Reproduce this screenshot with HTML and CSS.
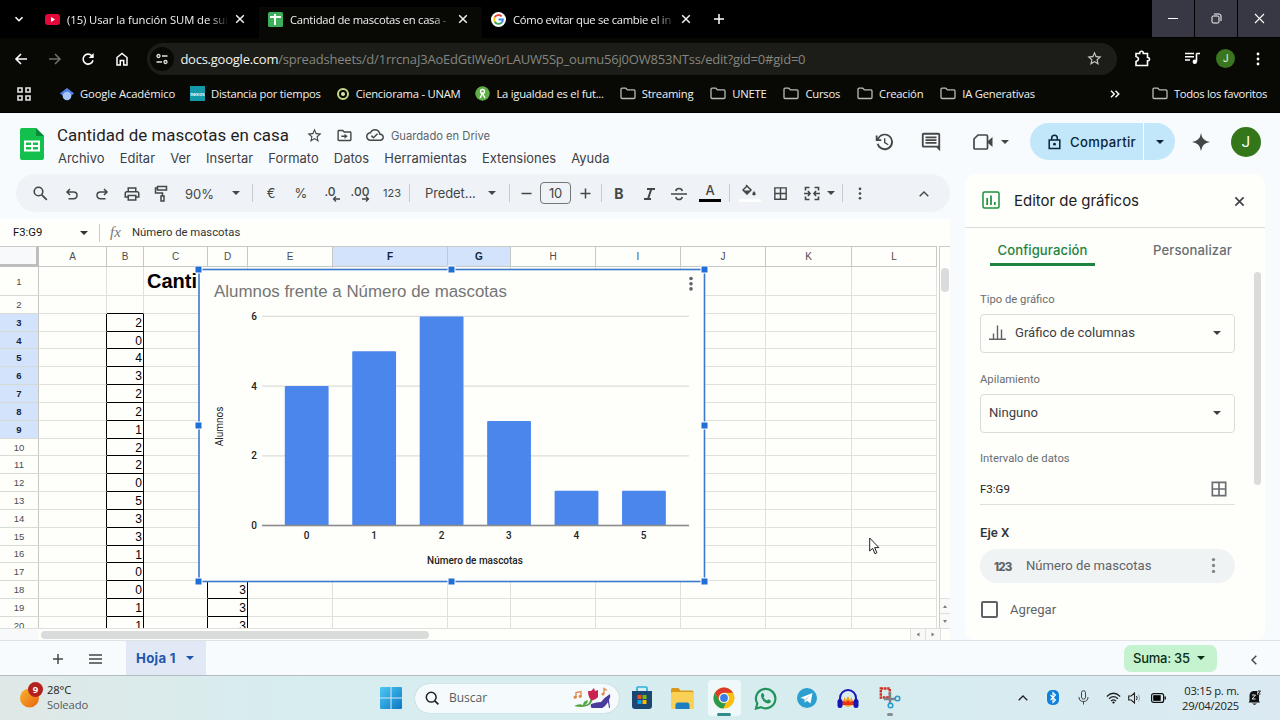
FILE: index.html
```
<!DOCTYPE html>
<html lang="es">
<head>
    <meta charset="UTF-8">
    <title>Cantidad de mascotas en casa</title>
    <link rel="stylesheet" href="styles.css">
</head>
<body>
<svg class="defs">
    <symbol id="close" viewBox="0 0 12 12"><path d="M2.2 2.2l7.6 7.6M9.8 2.2l-7.6 7.6" fill="none" stroke="currentColor" stroke-width="1.5"/></symbol>
    <symbol id="caret" viewBox="0 0 10 6"><path d="M1 1h8L5 5z" fill="currentColor"/></symbol>
    <symbol id="dots" viewBox="0 0 4 16"><circle cx="2" cy="3" r="1.4" fill="currentColor"/><circle cx="2" cy="8" r="1.4" fill="currentColor"/><circle cx="2" cy="13" r="1.4" fill="currentColor"/></symbol>
    <symbol id="folder" viewBox="0 0 16 13"><path d="M1 10.5v-8.300q0-1 1-1h3.800l1.700 1.700h6.500q1 0 1 1v6.600q0 1-1 1h-12q-1 0-1-1z" fill="none" stroke="currentColor" stroke-width="1.300"/></symbol>
    <symbol id="star" viewBox="0 0 24 24"><path fill="currentColor" d="M22 9.240l-7.190-.62L12 2 9.190 8.630 2 9.240l5.460 4.730L5.820 21 12 17.270 18.180 21l-1.630-7.030L22 9.240zM12 15.400l-3.760 2.270 1-4.280-3.320-2.880 4.380-.38L12 6.100l1.710 4.040 4.380.38-3.320 2.880 1 4.280L12 15.400z"/></symbol>
    <symbol id="grid4" viewBox="0 0 24 24"><path fill="currentColor" d="M3 3v18h18V3H3zm8 16H5v-6h6v6zm0-8H5V5h6v6zm8 8h-6v-6h6v6zm0-8h-6V5h6v6z"/></symbol>
</svg>

<!-- navegador -->
<div class="tabs">
    <span class="tabMenu"><svg width="10" height="10" viewBox="0 0 10 10"><path d="M1.500 3.200L5 6.700l3.500-3.500" fill="none" stroke="#fff" stroke-width="1.600"/></svg></span>
    <div class="tab">
        <svg width="15" height="15" viewBox="0 0 15 15"><rect y="2" width="15" height="11" rx="3" fill="#e5093a"/><path d="M6 5v5l4-2.500z" fill="#fff"/></svg>
        <span class="tabText">(15) Usar la función SUM de sur</span>
        <svg class="x"><use href="#close"/></svg>
    </div>
    <div class="tab curr">
        <svg width="15" height="15" viewBox="0 0 15 15"><rect width="15" height="15" rx="1.500" fill="#3fae5a"/><path d="M2 5h11M7 2v11" stroke="#fff" stroke-width="2"/></svg>
        <span class="tabText">Cantidad de mascotas en casa -</span>
        <svg class="x"><use href="#close"/></svg>
    </div>
    <div class="tab">
        <svg width="15" height="15" viewBox="0 0 15 15"><circle cx="7.500" cy="7.500" r="7.500" fill="#fff"/><g fill="none" stroke-width="1.900"><path d="M3.700 5.300A4.400 4.400 0 0 1 10.700 4.400" stroke="#ea4335"/><path d="M3.700 9.700A4.400 4.400 0 0 1 3.700 5.300" stroke="#fbbc04"/><path d="M10.400 10.800A4.400 4.400 0 0 1 3.700 9.700" stroke="#34a853"/><path d="M7.500 7.500h4.400Q11.900 9.700 10.400 10.800" stroke="#4285f4"/></g></svg>
        <span class="tabText">Cómo evitar que se cambie el in</span>
        <svg class="x"><use href="#close"/></svg>
    </div>
    <svg class="newTab" width="12" height="12" viewBox="0 0 12 12"><path d="M6 1v10M1 6h10" stroke="#fff" stroke-width="1.500"/></svg>
    <div class="winBtns">
        <span><svg width="10" height="10" viewBox="0 0 10 10"><path d="M0 4.500h10" stroke="#fff"/></svg></span>
        <span><svg width="11" height="11" viewBox="0 0 11 11"><g fill="none" stroke="#fff"><rect x="1" y="3" width="7" height="7" rx="1.200"/><path d="M3 1h5q2 0 2 2v5"/></g></svg></span>
        <span><svg width="11" height="11" viewBox="0 0 11 11"><path d="M1 1l9 9M10 1l-9 9" stroke="#fff" stroke-width="1.100"/></svg></span>
    </div>
</div>
<div class="nav">
    <svg class="ni" viewBox="0 0 14 14"><path d="M13 7H2M7 2L2 7l5 5" fill="none" stroke="#fff" stroke-width="1.600"/></svg>
    <svg class="ni" viewBox="0 0 14 14"><path d="M1 7h11M7 2l5 5-5 5" fill="none" stroke="#6f706d" stroke-width="1.500"/></svg>
    <svg class="ni" viewBox="0 0 14 14"><path d="M12 8.200A5 5 0 1 1 10.600 3.500L12 4.800" fill="none" stroke="#fff" stroke-width="1.600"/><path d="M12.700 1v5H7.700z" fill="#fff"/></svg>
    <svg class="ni" viewBox="0 0 14 14"><path d="M2 13V5.500L7 1.500l5 4V13H8.700V8.500H5.300V13z" fill="none" stroke="#fff" stroke-width="1.500"/></svg>
    <div class="url">
        <span class="site"><svg width="12" height="12" viewBox="0 0 12 12"><g fill="none" stroke="#e3e3e3" stroke-width="1.300"><circle cx="2.500" cy="3" r="1.500"/><path d="M6 3h5.500M.5 9H6"/><circle cx="9.500" cy="9" r="1.500"/></g></svg></span>
        <span class="host">docs.google.com</span><span class="path">/spreadsheets/d/1rrcnaJ3AoEdGtIWe0rLAUW5Sp_oumu56j0OW853NTss/edit?gid=0#gid=0</span>
        <svg class="fav" width="17" height="17"><use href="#star"/></svg>
    </div>
    <svg class="ext" width="17" height="17" viewBox="0 0 17 17"><path d="M2 3.500h3.700V3a1.800 1.800 0 0 1 3.600 0v.5h4.200v4h.3a1.700 1.700 0 0 1 0 3.400h-.3v4.600H2v-4q2.500-.8 2.500-2.500T2 6.500z" fill="none" stroke="#fff" stroke-width="1.600"/></svg>
    <svg class="music" width="15" height="13" viewBox="0 0 15 13"><path d="M0 1.500h9M0 4.700h9M0 8h5M11.500 1.500v8M11.500 1.500h3.500" stroke="#fff" stroke-width="1.600"/><circle cx="9.800" cy="9.800" r="2.200" fill="#fff"/></svg>
    <span class="me">J</span>
    <svg class="navDots" width="4" height="16"><use href="#dots"/></svg>
</div>
<div class="marks">
    <svg class="apps" width="14" height="14" viewBox="0 0 14 14"><g fill="none" stroke="#e3e3e3" stroke-width="1.600"><path d="M1 1h4v4H1zM9 1h4v4H9zM1 9h4v4H1zM9 9h4v4H9z"/></g></svg>
    <a class="acad"><svg width="14" height="14" viewBox="0 0 14 14"><path d="M7 1l7 5.500H0z" fill="#5b8def"/><path d="M0 6.500L7 12l7-5.500L7 2z" fill="#4c7fe0"/><circle cx="7" cy="9" r="4.300" fill="#a9c6fb"/></svg>Google Académico</a>
    <a><svg width="15" height="15" viewBox="0 0 15 15"><rect width="15" height="15" fill="#1499ab"/><text x="7.500" y="9.500" class="tiny">nexos</text></svg>Distancia por tiempos</a>
    <a><svg width="14" height="14" viewBox="0 0 14 14"><circle cx="7" cy="7" r="5" fill="none" stroke="#c3d887" stroke-width="2"/><circle cx="7" cy="7" r="2" fill="#d6e7a5"/></svg>Cienciorama - UNAM</a>
    <a class="last"><svg width="15" height="15" viewBox="0 0 15 15"><circle cx="7.500" cy="7.500" r="7.200" fill="#5fae45"/><circle cx="7.500" cy="5.500" r="2" fill="none" stroke="#fff" stroke-width="1.300"/><path d="M5 12l2.500-4.500L10 12" fill="none" stroke="#fff" stroke-width="1.500"/></svg>La igualdad es el fut...</a>
    <a class="dir"><svg class="folder"><use href="#folder"/></svg>Streaming</a>
    <a class="dir"><svg class="folder"><use href="#folder"/></svg>UNETE</a>
    <a class="dir"><svg class="folder"><use href="#folder"/></svg>Cursos</a>
    <a class="dir"><svg class="folder"><use href="#folder"/></svg>Creación</a>
    <a class="dir"><svg class="folder"><use href="#folder"/></svg>IA Generativas</a>
    <svg class="more" width="10" height="8" viewBox="0 0 10 8"><path d="M1 .7L4.300 4 1 7.300M5.500 .7L8.800 4 5.500 7.300" fill="none" stroke="#fff" stroke-width="1.400"/></svg>
    <a class="all"><svg class="folder"><use href="#folder"/></svg>Todos los favoritos</a>
</div>

<!-- cabecera de la hoja -->
<div class="head">
    <svg class="logo" width="24" height="33" viewBox="0 0 24 33"><path d="M2 0h14l8 8v22q0 2-2 2H2q-2 0-2-2V2q0-2 2-2z" fill="#14c04d"/><path d="M16 0l8 8h-8z" fill="#0a8a37"/><path d="M4 12.500h16v11H4zM6 14.500v2.600h5v-2.600zM13 14.500v2.600h5v-2.600zM6 19v2.600h5V19zM13 19v2.600h5V19z" fill="#fff" fill-rule="evenodd"/></svg>
    <div class="doc">
        <div class="name">
            <span class="nameText">Cantidad de mascotas en casa</span>
            <svg width="17" height="17"><use href="#star"/></svg>
            <svg width="17" height="17" viewBox="0 0 24 24"><path fill="currentColor" d="M20 6h-8l-2-2H4c-1.100 0-2 .9-2 2v12c0 1.100.9 2 2 2h16c1.100 0 2-.9 2-2V8c0-1.100-.9-2-2-2zm0 12H4V6h5.170l2 2H20v10zm-8-4v2.500l4.500-3.500L12 9.500V12H7.500v2z"/></svg>
            <svg width="18" height="18" viewBox="0 0 24 24"><path fill="currentColor" d="M19.350 10.040C18.670 6.590 15.640 4 12 4 9.110 4 6.610 5.640 5.360 8.040 2.350 8.360 0 10.900 0 14c0 3.310 2.690 6 6 6h13c2.760 0 5-2.240 5-5 0-2.640-2.050-4.780-4.650-4.960zM19 18H6c-2.210 0-4-1.790-4-4s1.790-4 4-4h.71C7.370 7.690 9.480 6 12 6c3.040 0 5.500 2.460 5.500 5.500v.5H19c1.660 0 3 1.340 3 3s-1.340 3-3 3zm-9-3.820l-2.090-2.090L6.500 13.500 10 17l6.010-6.010-1.410-1.410z"/></svg>
            <span class="saved">Guardado en Drive</span>
        </div>
        <div class="menu"><span>Archivo</span><span>Editar</span><span>Ver</span><span>Insertar</span><span>Formato</span><span>Datos</span><span>Herramientas</span><span>Extensiones</span><span>Ayuda</span></div>
    </div>
    <div class="actions">
        <svg class="history" width="22" height="22" viewBox="0 0 24 24"><path fill="currentColor" d="M13 3a9 9 0 0 0-8 4.900V5H3v6h6V9H6.300A7 7 0 1 1 6 13.500l-1.900.6A9 9 0 1 0 13 3zm-1 5v5l4.300 2.600.7-1.200-3.500-2.100V8z"/></svg>
        <svg class="comment" width="22" height="22" viewBox="0 0 24 24"><path fill="currentColor" d="M22 4c0-1.100-.9-2-2-2H4c-1.100 0-2 .9-2 2v12c0 1.100.9 2 2 2h14l4 4V4zm-2 12H4V4h16v12zM6 12h12v2H6zm0-3h12v2H6zm0-3h12v2H6z"/></svg>
        <svg class="video" width="20" height="16" viewBox="0 0 20 16"><path d="M5 1h8.500q1 0 1 1v12q0 1-1 1H2q-1 0-1-1V5z" fill="none" stroke="currentColor" stroke-width="1.700"/><path d="M15 7l4.500-4v10L15 9z" fill="currentColor"/></svg>
        <svg class="caret videoCaret"><use href="#caret"/></svg>
        <div class="share">
            <svg width="13" height="16" viewBox="0 0 13 16"><path d="M1.200 6h10.600v8.500H1.200zM3.700 6V4a2.800 2.800 0 0 1 5.600 0v2" fill="none" stroke="currentColor" stroke-width="1.500"/><circle cx="6.500" cy="10.200" r="1.400" fill="currentColor"/></svg>
            <span class="shareText">Compartir</span>
            <span class="shareMore"><svg class="caret"><use href="#caret"/></svg></span>
        </div>
        <svg class="spark" width="18" height="18" viewBox="0 0 18 18"><path d="M9 0q1 8 9 9-8 1-9 9-1-8-9-9 8-1 9-9z" fill="currentColor"/></svg>
        <span class="user">J</span>
    </div>
</div>

<div class="main">
    <div class="left">
        <div class="bar">
            <span class="b search"><svg width="17" height="17" viewBox="0 0 17 17"><circle cx="6.500" cy="6.500" r="4.300" fill="none" stroke="currentColor" stroke-width="1.600"/><path d="M9.800 9.800l5 5" stroke="currentColor" stroke-width="1.800"/></svg></span>
            <span class="b low"><svg width="14" height="14" viewBox="0 0 14 14"><path d="M5 2L2 5l3 3M2 5h6.500q3.500 0 3.500 3.300T8.500 11.800H3.500" fill="none" stroke="currentColor" stroke-width="1.500"/></svg></span>
            <span class="b low"><svg width="14" height="14" viewBox="0 0 14 14"><path d="M9 2l3 3-3 3M12 5H5.500Q2 5 2 8.300t3.500 3.500h5" fill="none" stroke="currentColor" stroke-width="1.500"/></svg></span>
            <span class="b low"><svg width="18" height="18" viewBox="0 0 24 24"><path fill="currentColor" d="M19 8h-1V3H6v5H5c-1.660 0-3 1.340-3 3v6h4v4h12v-4h4v-6c0-1.660-1.340-3-3-3zM8 5h8v3H8V5zm8 14H8v-4h8v4zm2-4v-2H6v2H4v-4c0-.55.45-1 1-1h14c.55 0 1 .45 1 1v4h-2z"/></svg></span>
            <span class="b low"><svg width="16" height="17" viewBox="0 0 16 17"><path d="M3.500 1.500h9v3.500h-9zM3.500 3H1.500v5h7v3M7 11h3v5H7z" fill="none" stroke="currentColor" stroke-width="1.500"/></svg></span>
            <span class="zoomText">90%</span>
            <span class="c28"><svg class="caret"><use href="#caret"/></svg></span>
            <i></i>
            <span class="b euro">€</span>
            <span class="b euro">%</span>
            <span class="b dec">.0<svg width="8" height="6" viewBox="0 0 8 6"><path d="M8 3H2M4 .5L1.500 3 4 5.500" fill="none" stroke="currentColor" stroke-width="1.300"/></svg></span>
            <span class="b dec">.00<svg width="8" height="6" viewBox="0 0 8 6"><path d="M0 3h6M4 .5L6.500 3 4 5.500" fill="none" stroke="currentColor" stroke-width="1.300"/></svg></span>
            <span class="b fmt">123</span>
            <i></i>
            <span class="font">Predet...</span>
            <span class="c24"><svg class="caret"><use href="#caret"/></svg></span>
            <i class="off"></i>
            <span class="c28"><svg width="11" height="11" viewBox="0 0 11 11"><path d="M.5 5.500h10" stroke="currentColor" stroke-width="1.500"/></svg></span>
            <span class="size">10</span>
            <span class="c28"><svg width="11" height="11" viewBox="0 0 11 11"><path d="M.5 5.500h10M5.500.5v10" stroke="currentColor" stroke-width="1.500"/></svg></span>
            <i></i>
            <span class="b bold">B</span>
            <span class="b low"><svg width="11" height="12" viewBox="0 0 11 12"><path d="M3 1h8M0 11h7M7.300 1L4 11" stroke="currentColor" stroke-width="2" fill="none"/></svg></span>
            <span class="b low"><svg width="16" height="14" viewBox="0 0 16 14"><path d="M0 7h16M11.300 4Q10.800 1.500 8 1.500T4.800 4M4.800 10q.5 2.500 3.200 2.500T11.300 10" fill="none" stroke="currentColor" stroke-width="1.600"/></svg></span>
            <span class="b color">A</span>
            <i></i>
            <span class="b fill"><svg width="16" height="15" viewBox="0 0 16 15"><path d="M4 1l5 5-4 4-4-4 4-4" fill="none" stroke="currentColor" stroke-width="1.500"/><path d="M1 6.500h8L5 10.500z" fill="currentColor"/><path d="M12 7q3.500 4 0 4.500-3.500-.5 0-4.500z" fill="currentColor"/></svg></span>
            <span class="b low borders"><svg width="17" height="17"><use href="#grid4"/></svg></span>
            <span class="b low"><svg width="16" height="15" viewBox="0 0 16 15"><path d="M5.500 1.500H1.500v3M10.500 1.500h4v3M5.500 13.500H1.500v-3M10.500 13.500h4v-3M0 7.500h5M16 7.500h-5M4 5l2 2.500L4 10M12 5l-2 2.500 2 2.500" fill="none" stroke="currentColor" stroke-width="1.600"/></svg></span>
            <span class="c12"><svg class="caret"><use href="#caret"/></svg></span>
            <i></i>
            <span class="b low"><svg width="4" height="15"><use href="#dots"/></svg></span>
            <span class="b up low"><svg width="10" height="6" viewBox="0 0 10 6"><path d="M.7 5.300L5 1l4.300 4.300" fill="none" stroke="currentColor" stroke-width="1.400"/></svg></span>
        </div>
        <div class="formula">
            <span class="range">F3:G9</span><svg class="caret"><use href="#caret"/></svg>
            <i></i><em>fx</em><span>Número de mascotas</span>
        </div>
        <div class="sheet">
            <div class="grid" id="grid"></div>
            <div class="vbar"><b></b><u></u><u class="down"></u></div>
            <svg class="chart" viewBox="195 265 514 322" id="chart">
                <rect x="199" y="269.500" width="505.500" height="312" fill="#fefefb" stroke="#3c78cc" stroke-width="1.600"/>
                <text x="214" y="297" class="chTitle">Alumnos frente a Número de mascotas</text>
                <g fill="#5f6368"><circle cx="691" cy="278.500" r="1.800"/><circle cx="691" cy="283.700" r="1.800"/><circle cx="691" cy="288.900" r="1.800"/></g>
                <text x="475" y="564" class="chAxis mid">Número de mascotas</text>
                <text transform="translate(222.500 426.500) rotate(-90)" class="chAxis mid thin">Alumnos</text>
            </svg>
            <svg class="mouse" width="11" height="18" viewBox="0 0 11 18"><path d="M.7 1v13l3-2.700 2.200 5.400 2-.9-2.200-5.200h4.200z" fill="#fff" stroke="#222"/></svg>
        </div>
        <div class="hbar"><b></b><u></u><u class="next"></u><s></s></div>
    </div>

    <!-- editor de gráficos -->
    <div class="panel">
        <div class="panelHead">
            <svg width="18" height="18" viewBox="0 0 18 18"><rect x="1" y="1" width="16" height="16" rx="1.500" fill="none" stroke="#1e8e3e" stroke-width="1.500"/><path d="M5.200 7v7M9 4.500V14M12.800 11v3" stroke="#1e8e3e" stroke-width="1.700"/></svg>
            <span>Editor de gráficos</span>
            <svg class="x"><use href="#close"/></svg>
        </div>
        <div class="panelTabs"><span class="on">Configuración</span><span>Personalizar</span></div>
        <div class="fields">
            <label>Tipo de gráfico</label>
            <div class="select">
                <svg width="17" height="15" viewBox="0 0 17 15"><path d="M0 14.300h17M4.500 14V8.500M8.500 14V.5M12.500 14V4.500" stroke="#5f6368" stroke-width="1.400"/></svg>
                <span>Gráfico de columnas</span><svg class="caret"><use href="#caret"/></svg>
            </div>
            <label>Apilamiento</label>
            <div class="select"><span>Ninguno</span><svg class="caret"><use href="#caret"/></svg></div>
            <label class="l3">Intervalo de datos</label>
            <div class="input"><span>F3:G9</span><svg width="20" height="20"><use href="#grid4"/></svg></div>
            <div class="axis">Eje X</div>
            <div class="chip"><b>123</b><span>Número de mascotas</span><svg width="5" height="19"><use href="#dots"/></svg></div>
            <div class="check"><b></b>Agregar</div>
        </div>
        <div class="thumb"></div>
    </div>
</div>

<div class="foot">
    <svg class="plus" width="12" height="12" viewBox="0 0 12 12"><path d="M6 1v10M1 6h10" stroke="#444746" stroke-width="1.500"/></svg>
    <svg class="lines" width="13" height="10" viewBox="0 0 13 10"><path d="M0 1h13M0 5h13M0 9h13" stroke="#444746" stroke-width="1.500"/></svg>
    <div class="hoja">Hoja 1<svg class="caret"><use href="#caret"/></svg></div>
    <div class="suma">Suma: 35<svg class="caret"><use href="#caret"/></svg></div>
    <svg class="back" width="6" height="10" viewBox="0 0 6 10"><path d="M5.300 .7L1 5l4.300 4.300" fill="none" stroke="#444746" stroke-width="1.500"/></svg>
</div>

<!-- barra de tareas -->
<div class="task">
    <div class="weather">
        <svg width="26" height="30" viewBox="0 0 26 30"><defs><linearGradient id="sun" x1="0" y1="0" x2="1" y2="1"><stop offset="0" stop-color="#fbb430"/><stop offset="1" stop-color="#e8630f"/></linearGradient></defs><circle cx="10.500" cy="16" r="9.500" fill="url(#sun)"/><circle cx="16.500" cy="7.500" r="7.500" fill="#b3211f"/><text x="16.500" y="11" class="nine">9</text></svg>
        <div><p>28°C</p><p class="dim">Soleado</p></div>
    </div>
    <svg class="win" width="22" height="22" viewBox="0 0 22 22"><defs><linearGradient id="blue" x1="0" y1="0" x2="1" y2="1"><stop offset="0" stop-color="#4fc8f4"/><stop offset="1" stop-color="#0a78c4"/></linearGradient></defs><path fill="url(#blue)" d="M0 1q0-1 1-1h9.500v10.500H0zM11.500 0H21q1 0 1 1v9.500H11.500zM0 11.500h10.500V22H1q-1 0-1-1zM11.500 11.500H22V21q0 1-1 1h-9.500z"/></svg>
    <div class="find">
        <svg width="14" height="14" viewBox="0 0 14 14"><circle cx="6.200" cy="6.200" r="4.900" fill="none" stroke="#222" stroke-width="1.500"/><path d="M9.800 9.800l3.600 3.600" stroke="#222" stroke-width="1.700"/></svg>
        <span>Buscar</span>
        <svg class="art" width="38" height="22" viewBox="0 0 38 22">
            <g fill="none" stroke="#e0884e" stroke-width="1.300"><path d="M3 10V5.500l5-1V9M31 7V1.500l3 2"/></g><g fill="#e0884e"><circle cx="2.200" cy="10.200" r="1.600"/><circle cx="7.200" cy="9.300" r="1.600"/><circle cx="30" cy="7" r="1.600"/></g>
            <path d="M20 10q-1 8-6 9-6 2-13 0 5-3 9-1 0-4 5-5 0 3-3 5 5-1 6-8z" fill="#55a545"/>
            <path d="M15 4l3 0 3-3 1 3 3-1 0 7q-3 4-7 3-3-3-3-9z" fill="#cb2350"/>
            <path d="M37 7q-5 3-9 8-4 0-10 2-1 3 1 4h10q3-1 6-6l1 6h1l-1-8q2-3 1-6z" fill="#4a3c9c"/>
        </svg>
    </div>
    <span class="app"><svg width="22" height="24" viewBox="0 0 22 24"><path d="M6 6V2q0-1 1-1h8q1 0 1 1v4" fill="none" stroke="#31b0de" stroke-width="1.700"/><path d="M1 5h20v15q0 3-3 3H4q-3 0-3-3z" fill="#1c4772"/><path d="M6.500 9h4v4h-4z" fill="#f25022"/><path d="M11.500 9h4v4h-4z" fill="#7fba00"/><path d="M6.500 14h4v4h-4z" fill="#00a4ef"/><path d="M11.500 14h4v4h-4z" fill="#ffb900"/></svg></span>
    <span class="app"><svg width="23" height="21" viewBox="0 0 23 21"><path d="M0 1.500Q0 0 1.500 0h6l2 2.500H21q1.500 0 1.500 1.500v6H0z" fill="#d99a1c"/><rect y="4" width="23" height="17" rx="1.500" fill="#fbd155"/><path d="M4.500 21v-4q0-2.500 2.500-2.500h9q2.500 0 2.500 2.500v4z" fill="#1d7fc0"/></svg></span>
    <span class="app on"><svg width="22" height="22" viewBox="0 0 48 48"><circle cx="24" cy="24" r="23" fill="#fbbf12"/><path d="M4.100 12.500A23 23 0 0 1 43.900 12.500H24A11.500 11.500 0 0 0 14 29.800z" fill="#dd3a2c"/><path d="M4.100 12.500L14 29.800A11.500 11.500 0 0 0 24 35.500l4-.700L22.500 47A23 23 0 0 1 4.100 12.500z" fill="#2c9a4b"/><circle cx="24" cy="24" r="11" fill="#fff"/><circle cx="24" cy="24" r="8.500" fill="#3b7de8"/></svg></span>
    <span class="app"><svg width="23" height="23" viewBox="0 0 23 23"><path d="M2 21.500l1.300-5A9.700 9.700 0 1 1 7 20.100z" fill="none" stroke="#22935a" stroke-width="2.200"/><path d="M7.500 6.500q1.500-1 2.200.5l.8 2-1 1.300q1.200 2.300 3.500 3.300l1.200-1.300 2.500 1.200q.6 1.500-1 2.600-2.500 1.300-6-1.900-4-3.900-2.200-7.700z" fill="#22935a"/></svg></span>
    <span class="app"><svg width="20" height="20" viewBox="0 0 20 20"><circle cx="10" cy="10" r="10" fill="#2a9fd0"/><path d="M3.500 9.700L15.500 5l-2 10.500-3.600-2.700-2 2-.4-3.500z" fill="#fff"/><path d="M7.500 11.300L13 7.500l-4.300 4.900-.8 2.400z" fill="#b7d9ea"/></svg></span>
    <span class="app"><svg width="22" height="21" viewBox="0 0 22 21"><path d="M3 13v-3a8 8 0 0 1 16 0v3" fill="none" stroke="#1717b8" stroke-width="2"/><path d="M4.500 12l1.500 2 1.500-5 1.500 3 2-4 2 4 1.500-3 1.500 5 1.500-2v5l-3 .5-3.500 1.500-3.500-1.500-3-.5z" fill="#f9a01b"/><path d="M5 14l2-1 2 1 2-2 2 2 2-1 2 1v3H5z" fill="#e6311b"/><rect x=".5" y="11" width="5" height="9" rx="2.300" fill="#1717b8"/><rect x="16.500" y="11" width="5" height="9" rx="2.300" fill="#1717b8"/></svg></span>
    <span class="app idle"><svg width="22" height="22" viewBox="0 0 22 22"><path d="M1.800 1.500h9v9h-9z" fill="none" stroke="#cf2e1e" stroke-width="2.400" stroke-dasharray="2.500 .7"/><path d="M11 5v11M5 12h11" stroke="#7c8288" stroke-width="2.400"/><g fill="none" stroke="#2a98c8" stroke-width="1.500"><circle cx="18.500" cy="11.500" r="2.300"/><circle cx="11.500" cy="18.500" r="2.300"/></g></svg></span>
    <div class="tray">
        <svg width="10" height="6" viewBox="0 0 10 6"><path d="M.7 5.300L5 1l4.300 4.300" fill="none" stroke="#222" stroke-width="1.300"/></svg>
        <svg class="bt" width="12" height="15" viewBox="0 0 12 15"><rect width="12" height="15" rx="5" fill="#0f80dc"/><path d="M3.500 5l5 5L6 12.500v-10L8.500 5l-5 5" fill="none" stroke="#fff" stroke-width="1.100"/></svg>
        <svg class="mic" width="11" height="15" viewBox="0 0 11 15"><rect x="3.500" y=".7" width="4" height="8.500" rx="2" fill="none" stroke="#444"/><path d="M1 7q0 4.500 4.500 4.500T10 7M5.500 11.500v3" fill="none" stroke="#444"/></svg>
        <svg class="wifi" width="15" height="12" viewBox="0 0 15 12"><g fill="none" stroke="#222" stroke-width="1.200"><path d="M.8 4.500q6.700-6.500 13.400 0M3 6.800q4.500-4.300 9 0M5 9q2.500-2.300 5 0"/></g><circle cx="7.500" cy="10.500" r="1.100"/></svg>
        <svg class="vol" width="14" height="12" viewBox="0 0 14 12"><path d="M.7 4h2.500l3.300-3v10L3.200 8H.7z" fill="none" stroke="#222" stroke-width="1.100"/><path d="M8.500 4q1.300 2 0 4" fill="none" stroke="#222"/><path d="M10.500 2.500q2.300 3.500 0 7" fill="none" stroke="#9aa5a8"/></svg>
        <svg class="bat" width="15" height="10" viewBox="0 0 15 10"><rect x=".6" y=".6" width="12" height="8.800" rx="2" fill="none" stroke="#111" stroke-width="1.200"/><rect x="2.200" y="2.200" width="7.500" height="5.600"/><path d="M14.200 3.500v3" stroke="#111" stroke-width="1.400"/></svg>
        <div class="clock"><p>03:15 p. m.</p><p>29/04/2025</p></div>
        <svg width="13" height="15" viewBox="0 0 13 15"><path d="M1.500 11V6q0-4.500 4-5h4L9 4.500h2V11l1 1.500H.5zM4 13.500h5l-2.500 1.500z" fill="#111"/><path d="M4 5h3.500L4 9h3.500" fill="none" stroke="#d8eaf0"/><path d="M10 1h2.500L10 4h2.500" fill="none" stroke="#111"/></svg>
    </div>
</div>

<script>
    var grid = document.getElementById('grid');
    var cols = ['', 'A', 'B', 'C', 'D', 'E', 'F', 'G', 'H', 'I', 'J', 'K', 'L'];
    var colB = [2, 0, 4, 3, 2, 2, 1, 2, 2, 0, 5, 3, 3, 1, 0, 0, 1, 1];

    function add(text, cls) {
        var cell = document.createElement('div');
        cell.textContent = text;
        cell.className = cls;
        grid.appendChild(cell);
    }

    // fila 0 = letras de columna
    for (var r = 0; r <= 20; r++) {
        for (var c = 0; c < cols.length; c++) {
            if (r == 0) {
                add(cols[c], c == 0 ? 'corner' : (c == 6 || c == 7) ? 'th sel' : 'th');
            } else if (c == 0) {
                add(r, (r >= 3 && r <= 9) ? 'rh sel' : 'rh');
            } else if (c == 2 && r >= 3) {
                add(colB[r - 3], 'td num');
            } else if (c == 4 && r >= 18) {
                add(3, 'td num');
            } else if (c == 3 && r == 1) {
                add('Canti', 'td big');
            } else {
                add('', (c == 1 || c == 3) && r >= (c == 1 ? 3 : 18) ? 'td edge' : (r == 2 && c == 2) ? 'td under' : 'td');
            }
        }
    }

    /*gráfico*/
    var chart = document.getElementById('chart');
    var data = [4, 5, 6, 3, 1, 1];
    var base = 525.5, unit = 34.85;

    function draw(tag, attrs, text) {
        var el = document.createElementNS('http://www.w3.org/2000/svg', tag);
        for (var k in attrs) {
            el.setAttribute(k, attrs[k]);
        }
        if (text !== undefined) el.textContent = text;
        chart.appendChild(el);
    }

    for (var v = 0; v <= 6; v += 2) {
        var y = base - v * unit;
        draw('line', {x1: 262, x2: 689, y1: y, y2: y, 'class': 'chLine'});
        draw('text', {x: 257, y: y + 3.5, 'class': 'chAxis end'}, v);
    }
    for (var i = 0; i < data.length; i++) {
        var h = data[i] * unit;
        draw('rect', {x: 284.8 + i * 67.45, y: base - h, width: 43.8, height: h, rx: 1, 'class': 'chBar'});
        draw('text', {x: 306.7 + i * 67.4, y: 539, 'class': 'chAxis mid'}, i);
    }
    draw('line', {x1: 262, x2: 689, y1: base, y2: base, 'class': 'chBase'});

    [198.5, 451.5, 704.5].forEach(function (x) {
        [269.5, 425.5, 581.5].forEach(function (y) {
            if (x == 451.5 && y == 425.5) return;
            draw('rect', {x: x - 3.5, y: y - 3.5, width: 7, height: 7, 'class': 'chDot'});
        });
    });
</script>
</body>
</html>
```
FILE: styles.css
```
* {
    box-sizing: border-box;
    margin: 0;
    padding: 0;
}
body {
    width: 1280px;
    height: 720px;
    overflow: hidden;
    display: flex;
    flex-direction: column;
    background: #f8fbfe;
    color: #202124;
    font-family: Roboto, sans-serif;
    white-space: nowrap;
}
svg {
    display: block;
    flex: none;
}
.defs {
    display: none;
}
.caret {
    width: 10px;
    height: 6px;
}
.x {
    width: 12px;
    height: 12px;
}

/* pestañas */
.tabs, .nav, .marks, .task {
    font-family: "Open Sans", "Noto Sans", sans-serif;
}
.tabs {
    height: 38px;
    flex: none;
    display: flex;
    background: #000;
    color: #f1f1f1;
    font-size: 11.25px;
    font-weight: 500;
    letter-spacing: -0.29px;
}
.tabMenu {
    width: 30px;
    margin-right: 6px;
    padding-left: 14px;
    align-self: center;
}
.tab {
    width: 223px;
    display: flex;
    align-items: center;
    padding-left: 9px;
}
.tab:nth-child(2) {
    letter-spacing: -0.06px;
}
.tab.curr {
    background: linear-gradient(#000 7px, #080904 7px);
}
.tabText {
    width: 160px;
    margin: 0 7px;
    -webkit-mask-image: linear-gradient(90deg, #000 143px, transparent 162px);
    mask-image: linear-gradient(90deg, #000 143px, transparent 162px);
}
.newTab {
    align-self: center;
    margin-left: 8px;
}
.winBtns {
    margin-left: auto;
    height: 37px;
    display: flex;
    gap: 1px;
}
.winBtns span {
    width: 42px;
    display: flex;
    align-items: center;
    justify-content: center;
    background: #373843;
}

/* barra de direcciones */
.nav {
    height: 41px;
    flex: none;
    display: flex;
    align-items: center;
    padding-left: 14px;
    background: #080904;
    font-size: 13px;
}
.ni {
    width: 14px;
    height: 14px;
    margin-right: 19.6px;
}
.url {
    width: 970px;
    height: 32px;
    margin-left: -1px;
    border-radius: 16px;
    display: flex;
    align-items: center;
    background: #1c1d18;
    color: #85867f;
}
.site {
    width: 24px;
    height: 24px;
    margin: 0 6px 0 3px;
    border-radius: 12px;
    display: flex;
    align-items: center;
    justify-content: center;
    background: #080904;
}
.host {
    color: #f4f4f0;
    letter-spacing: -0.24px;
}
.path {
    letter-spacing: -0.21px;
}
.fav {
    margin-left: auto;
    margin-right: 14px;
    color: #c9cac5;
}
.ext {
    margin-left: 17px;
}
.music {
    margin-left: 34px;
}
.me {
    width: 19px;
    height: 19px;
    margin: 0 29px 0 16px;
    border-radius: 50%;
    background: #39761d;
    color: #e8f0e4;
    font: 10px/19px Roboto, sans-serif;
    text-align: center;
}
.navDots {
    color: #fff;
    margin-left: -8px;
}

.marks {
    height: 34px;
    flex: none;
    display: flex;
    align-items: center;
    padding: 0 13px 4px 17px;
    background: #080904;
    border-bottom: 1px solid #000;
    color: #f1f1f1;
    font-size: 11.25px;
    font-weight: 500;
    letter-spacing: -0.24px;
}
.apps {
    margin-right: 29px;
}
.marks a {
    display: flex;
    align-items: center;
    gap: 6px;
    margin-right: 15px;
}
.marks .acad {
    letter-spacing: -0.14px;
}
.marks .last {
    margin-right: 16px;
}
.marks .dir {
    margin-right: 17px;
}
.marks .all {
    margin: 0;
    letter-spacing: -0.3px;
}
.folder {
    width: 16px;
    height: 13px;
    color: #b9bab5;
}
.more {
    margin: 0 32px 0 auto;
}
.tiny {
    font: bold 5px "Liberation Sans", sans-serif;
    fill: #fff;
    text-anchor: middle;
    letter-spacing: 0;
}

/* cabecera */
.head {
    height: 61px;
    flex: none;
    display: flex;
    font-family: Inter, sans-serif;
    color: #444746;
}
.logo {
    margin: 15px 13px 0 20px;
}
.doc {
    width: 790px;
}
.name {
    height: 24px;
    margin-top: 10px;
    display: flex;
    align-items: center;
}
.nameText {
    width: 249px;
    font: 16.9px/24px Roboto, sans-serif;
    letter-spacing: 0.02px;
    color: #1f1f1f;
}
.name svg {
    margin-right: 13px;
}
.saved {
    font-size: 11.25px;
    letter-spacing: -0.04px;
    margin-left: -6px;
    padding-top: 2px;
    color: #5f6368;
}
.menu {
    display: flex;
    gap: 15.2px;
    margin: 2px 0 0 1px;
    font-size: 12.95px;
    line-height: 18px;
    letter-spacing: 0;
    color: #3c4043;
}
.actions {
    display: flex;
    align-items: center;
    height: 57px;
    margin-left: 26px;
}
.comment {
    margin-left: 25px;
}
.video {
    margin-left: 31px;
}
.videoCaret {
    margin: 0 20px 0 7px;
}
.share {
    width: 145px;
    height: 37px;
    border-radius: 19px;
    padding-left: 18px;
    display: flex;
    align-items: center;
    background: #c2e7fb;
    color: #0b2336;
}
.shareText {
    width: 73px;
    margin-left: 9px;
    font-size: 13.1px;
    font-weight: 500;
    letter-spacing: 0.34px;
}
.shareMore {
    height: 37px;
    padding-left: 11px;
    border-left: 1px solid #fff;
    display: flex;
    align-items: center;
}
.spark {
    margin: 0 21px 0 17px;
}
.user {
    width: 30px;
    height: 30px;
    margin-right: -20px;
    border-radius: 50%;
    background: #33771a;
    color: #fff;
    font: 15px/30px Roboto, sans-serif;
    text-align: center;
}

/* hoja + panel */
.main {
    height: 466px;
    flex: none;
    display: flex;
}
.left {
    width: 950px;
    margin-right: 15px;
    display: flex;
    flex-direction: column;
}
.bar {
    height: 38px;
    flex: none;
    margin-left: 16px;
    border-radius: 19px;
    padding-left: 9px;
    display: flex;
    align-items: center;
    background: #eff3f7;
    color: #444746;
    font-family: Inter, sans-serif;
    font-size: 13px;
}
.bar span {
    flex: none;
    display: flex;
    align-items: center;
    justify-content: center;
}
.bar i, .formula i {
    width: 1px;
    height: 18px;
    margin: 0 2px;
    background: #c7cbcf;
}
.bar .b {
    width: 30px;
}
.bar .low {
    padding-top: 1px;
}
.bar .euro {
    padding-left: 2px;
}
.bar .search {
    margin-right: 2px;
}
.bar .zoomText {
    width: 45px;
    justify-content: flex-start;
    padding-left: 8px;
    padding-top: 1px;
}
.c28 {
    width: 28px;
}
.c24 {
    width: 24px;
}
.bar .c12 {
    width: 14px;
    margin: 0 2px 0 -3px;
}
.dec {
    position: relative;
    height: 20px;
    padding-bottom: 4px;
    font-weight: 500;
    font-size: 12px;
}
.dec svg {
    position: absolute;
    right: 5px;
    bottom: 1px;
}
.bar .fmt {
    width: 32px;
    padding-left: 2px;
    font-size: 11px;
}
.bar .font {
    width: 68px;
    padding-left: 13px;
    justify-content: flex-start;
    letter-spacing: -0.1px;
}
.bar .off {
    margin-left: 5px;
}
.bar .size {
    width: 31px;
    height: 22px;
    border: 1px solid #747775;
    border-radius: 4px;
    letter-spacing: -0.3px;
}
.bar .bold {
    padding-top: 1px;
    font-weight: 700;
    font-size: 14px;
}
.bar .color {
    width: 22px;
    height: 18px;
    margin: 0 6px 0 5px;
    padding-bottom: 4px;
    border-bottom: 3px solid #000;
    font-weight: 500;
    line-height: 12px;
}
.bar .fill {
    width: 22px;
    height: 18px;
    margin: 0 4px 0 7px;
    border-bottom: 3px solid #fefefe;
}
.bar .borders {
    margin-right: 2px;
}
.bar .up {
    margin: 0 11px 0 auto;
}
.formula {
    height: 27px;
    flex: none;
    margin-top: 7px;
    padding-left: 13px;
    display: flex;
    align-items: center;
    background: #fefefb;
    color: #303336;
    font-size: 11.3px;
}
.range {
    width: 66px;
    color: #111;
}
.formula i {
    margin: 0 10px;
}
.formula em {
    width: 22px;
    font: italic 15px "Liberation Serif", serif;
    color: #777;
}
.sheet {
    height: 382px;
    position: relative;
    display: flex;
    overflow: hidden;
    background: #fefefb;
    font-family: "Liberation Sans", sans-serif;
}
.grid {
    width: 940px;
    flex: none;
    display: grid;
    grid-template-columns: 39px 68px 37px 64px 40px 85px 115px 63px 85px 85px 85px 86px 85px;
    grid-template-rows: 21px 29px 17.8px repeat(18, 17.83px);
    align-content: start;
    align-items: stretch;
    border-right: 1px solid #c9ccc9;
}
.corner {
    background: #f8f9fa;
    border-right: 3px solid #bcbfbe;
    border-bottom: 3px solid #bcbfbe;
    border-top: 1px solid #c9ccc9;
}
.th, .rh {
    display: flex;
    align-items: center;
    justify-content: center;
    border-right: 1px solid #c6c8c5;
    border-bottom: 1px solid #c6c8c5;
    color: #4a4d50;
    font-size: 10px;
}
.th {
    border-top: 1px solid #c6c8c5;
}
.rh {
    border-bottom-color: #d8dad6;
    font-size: 9.5px;
}
.sel {
    background: #d3e3fb;
    color: #14243c;
    font-weight: bold;
}
.td {
    min-width: 0;
    border-right: 1px solid #e0e1dd;
    border-bottom: 1px solid #e0e1dd;
}
.num {
    padding: 1px 1px 0 0;
    overflow: hidden;
    border-color: #000;
    font-size: 12px;
    line-height: 16px;
    text-align: right;
    color: #000;
}
.edge {
    border-right-color: #000;
}
.under {
    border-bottom-color: #000;
}
.big {
    border-right-color: transparent;
    padding-left: 3px;
    font-size: 20px;
    line-height: 29px;
    font-weight: bold;
    color: #000;
}
.vbar {
    width: 10px;
    display: flex;
    flex-direction: column;
    border-top: 1px solid #c9ccc9;
}
.vbar b {
    width: 8px;
    height: 24px;
    margin: 21px 0 auto 1px;
    border-radius: 4px;
    background: #d9dbdc;
}
.vbar u, .hbar u {
    width: 10px;
    height: 15px;
    border-top: 1px solid #dfe0de;
    display: flex;
    align-items: center;
    justify-content: center;
    background: #f9f9f8;
    text-decoration: none;
}
.vbar u::after, .hbar u::after {
    content: "";
    border: 2.5px solid transparent;
    border-bottom: 3px solid #7c7f80;
    border-top: 0;
}
.vbar .down::after {
    transform: rotate(180deg);
}
.chart {
    position: absolute;
    left: 195px;
    top: 19px;
    width: 514px;
    height: 322px;
}
.chTitle {
    font-size: 16.9px;
    fill: #757575;
}
.chAxis {
    font: 500 10px Roboto, sans-serif;
    fill: #222;
}
.thin {
    font-weight: 400;
}
.mid {
    text-anchor: middle;
}
.end {
    text-anchor: end;
}
.chLine {
    stroke: #dcdcd9;
    stroke-width: 1.3;
}
.chBase {
    stroke: #8c8c8c;
    stroke-width: 1.3;
}
.chBar {
    fill: #4a86ec;
}
.chDot {
    fill: #1f6fd6;
    stroke: #fefefb;
    stroke-width: 1;
}
.mouse {
    position: absolute;
    left: 869px;
    top: 291px;
}
.hbar {
    height: 12px;
    flex: none;
    display: flex;
    align-items: center;
    background: linear-gradient(90deg, #f8f9fa 38px, #fefefb 38px);
    border-top: 1px solid #dfe0de;
}
.hbar b {
    width: 388px;
    height: 8px;
    margin-left: 41px;
    margin-right: auto;
    border-radius: 4px;
    background: #d9dcda;
}
.hbar u {
    width: 15px;
    height: 12px;
    border-top: 0;
    border-left: 1px solid #dfe0de;
}
.hbar u::after {
    transform: rotate(-90deg);
}
.hbar .next::after {
    transform: rotate(90deg);
}
.hbar s {
    width: 10px;
    height: 12px;
    border-left: 1px solid #dfe0de;
}

.panel {
    width: 300px;
    position: relative;
    border-radius: 10px;
    background: #fefefb;
    color: #3c4043;
}
.panelHead {
    height: 54px;
    padding: 0 19px 1px 17px;
    display: flex;
    align-items: center;
    border-bottom: 1px solid #dadcdc;
    font: 15px Inter, sans-serif;
    letter-spacing: -0.03px;
}
.panelHead span {
    margin-left: 14px;
    color: #202124;
}
.panelHead .x {
    width: 13px;
    height: 13px;
    margin-left: auto;
    margin-top: 2px;
}
.panelTabs {
    display: flex;
    padding-left: 25px;
    font: 500 13.1px/45px Inter, sans-serif;
    letter-spacing: 0.1px;
    color: #6a6e72;
}
.panelTabs span {
    width: 105px;
    height: 38px;
    flex: none;
    text-align: center;
    margin-right: 45px;
}
.panelTabs span + span {
    margin-right: 0;
}
.panelTabs .on {
    color: #1e8340;
    border-bottom: 3px solid #1e8340;
}
.fields {
    width: 255px;
    margin: 25px 0 0 15px;
    font-size: 13.1px;
}
.fields label {
    display: block;
    margin-bottom: 5px;
    font-size: 11.25px;
    line-height: 18px;
    color: #6a6e72;
}
.select {
    height: 39px;
    margin-bottom: 18px;
    padding: 0 12px 2px 8px;
    display: flex;
    align-items: center;
    border: 1px solid #dadcdc;
    border-radius: 4px;
}
.select svg + span {
    margin-left: 9px;
}
.select .caret {
    margin-left: auto;
}
.fields .l3 {
    margin-top: -1px;
}
.input {
    height: 32px;
    padding: 0 6px 0 0;
    display: flex;
    align-items: center;
    justify-content: space-between;
    border-bottom: 1px solid #dfe0de;
    font-size: 11.5px;
    color: #202124;
}
.input svg {
    color: #6a6e72;
}
.axis {
    margin: 20px 0 8px;
    font-weight: 500;
    line-height: 16px;
    color: #303336;
}
.chip {
    height: 34px;
    padding: 0 19px 1px 14px;
    border-radius: 17px;
    display: flex;
    align-items: center;
    background: #f0f3f3;
    color: #5f6368;
}
.chip b {
    width: 32px;
    padding-top: 3px;
    font: 800 11.5px Inter, sans-serif;
    letter-spacing: -0.8px;
}
.chip svg {
    margin-left: auto;
    color: #80868b;
}
.check {
    height: 18px;
    margin: 17px 0 0 1px;
    display: flex;
    align-items: center;
    color: #5f6368;
}
.check b {
    width: 17px;
    height: 17px;
    margin-right: 12px;
    border: 2px solid #5f6368;
    border-radius: 2px;
}
.thumb {
    position: absolute;
    right: 4px;
    top: 98px;
    width: 7px;
    height: 213px;
    border-radius: 4px;
    background: #dadcdc;
}

/* pie */
.foot {
    height: 36px;
    flex: none;
    display: flex;
    align-items: center;
    border-top: 1px solid #dfe2e4;
    border-bottom: 1px solid #b3bcc0;
    background: #f8fbfe;
    font-family: Inter, sans-serif;
}
.plus {
    margin: 2px 31px 0 52px;
}
.lines {
    margin: 2px 24px 0 -6px;
}
.hoja {
    width: 80px;
    height: 34px;
    padding-left: 10px;
    display: flex;
    align-items: center;
    background: #e1e9f6;
    color: #1f56ad;
    font-size: 13.2px;
    font-weight: 700;
    letter-spacing: 0.3px;
}
.hoja .caret {
    margin-left: 9px;
}
.suma {
    width: 93px;
    height: 27px;
    margin-left: auto;
    padding-left: 9px;
    border-radius: 7px;
    display: flex;
    align-items: center;
    background: #c5f2cf;
    color: #0b2e16;
    font-size: 13px;
    font-weight: 500;
    letter-spacing: -0.25px;
}
.suma .caret {
    margin-left: 6px;
}
.back {
    margin: 3px 23px 0 34px;
}

.task {
    height: 44px;
    display: flex;
    align-items: center;
    background: linear-gradient(90deg, #dfe8e6, #d7edf0 300px, #d6ecef 900px, #dbeaf2);
    font-size: 11.25px;
    color: #222;
}
.weather {
    width: 360px;
    padding-left: 19px;
    padding-bottom: 2px;
    display: flex;
    gap: 2px;
    line-height: 15px;
    letter-spacing: -0.14px;
}
.dim {
    color: #555b5e;
}
.nine {
    font: bold 9.5px "Open Sans", sans-serif;
    fill: #fff;
    text-anchor: middle;
}
.win {
    margin: 0 13px 0 20px;
}
.find {
    width: 204px;
    height: 29px;
    margin-right: 2px;
    padding: 0 8px 1px 10px;
    border-radius: 15px;
    display: flex;
    align-items: center;
    background: #f5fbfc;
    box-shadow: 0 0 1px #9fb0b4;
    font-size: 12px;
    color: #555b5e;
}
.find span {
    margin-left: 10px;
}
.art {
    margin-left: auto;
}
.app {
    width: 33px;
    height: 36px;
    margin-right: 8.35px;
    display: flex;
    align-items: center;
    justify-content: center;
    flex: none;
    border-radius: 4px;
    position: relative;
}
.find + .app {
    margin-left: 4px;
}
.on.app {
    background: #f0f9fa;
}
.on.app::after, .idle::after {
    content: "";
    position: absolute;
    bottom: 0;
    width: 14px;
    height: 3px;
    border-radius: 2px;
    background: #2f8a8a;
}
.idle::after {
    width: 6px;
    background: #868d90;
}
.tray {
    margin-left: auto;
    padding: 0 19px 1px 0;
    display: flex;
    align-items: center;
}
.bt {
    margin-left: 19px;
}
.mic {
    margin-left: 19px;
}
.wifi {
    margin-left: 17px;
}
.vol {
    margin-left: 7px;
}
.bat {
    margin-left: 9px;
}
.clock {
    width: 73px;
    margin-right: 9px;
    text-align: right;
    line-height: 15px;
    letter-spacing: -0.27px;
}
```
